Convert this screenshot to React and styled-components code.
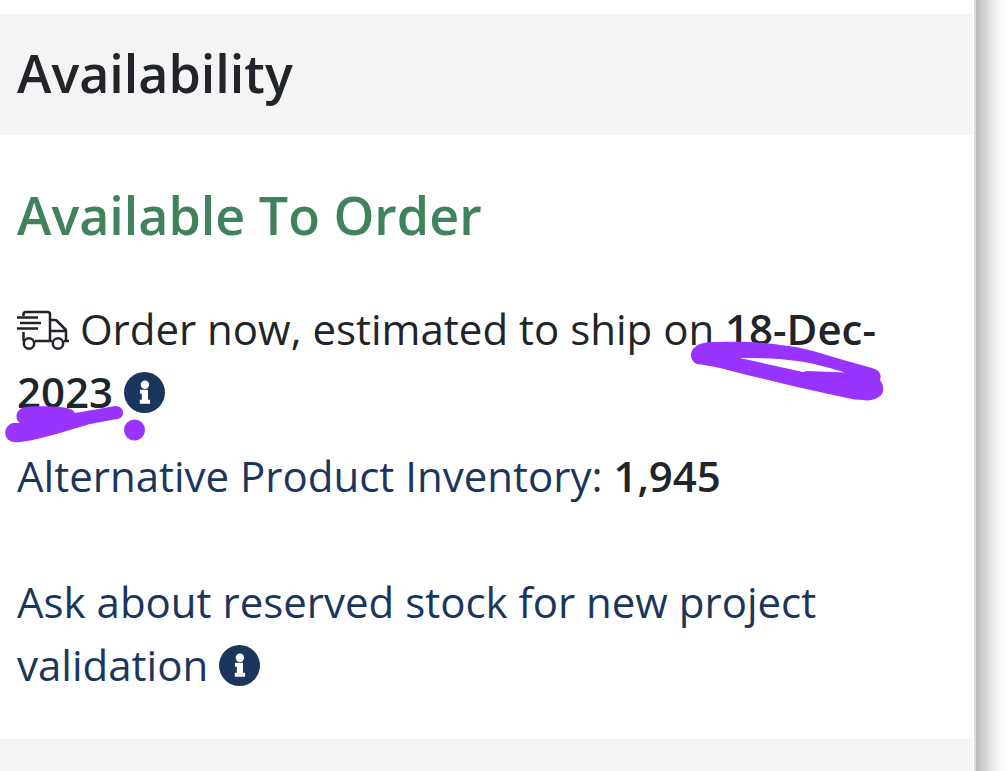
import React from "react";
import styled, { createGlobalStyle } from "styled-components";

const theme = {
  text: "#212529",
  link: "#1b365d",
  success: "#40825c",
  band: "#f4f4f4",
  marker: "#9933ff",
};

const InfoIcon = () => (
  <Info viewBox="0 0 40 40" aria-hidden="true">
    <circle cx="20" cy="20" r="20" fill={theme.link} />
    <circle cx="20.4" cy="12.5" r="4.1" fill="white" />
    <path d="M15.6 17.3H23.4V27H25.4V31H15.4V27H17.4V21.3H15.6Z" fill="white" />
  </Info>
);

const TruckIcon = () => (
  <Truck viewBox="0 0 52 40" aria-hidden="true">
    <path d="M6.500 6V4.500Q6.500 2 9 2H30.500Q33 2 33 4.500V31" />
    <path d="M0 7.500H21M3 13H24M0 18.500H21" />
    <path d="M6.500 22V31M18 31H35M47 31H52" />
    <path d="M33 10H38Q39 10 40 11L48.500 19.500Q49 20 49 21V31M33 21H49" />
    <circle cx="12" cy="33.500" r="5.200" />
    <circle cx="41" cy="33.500" r="5.200" />
  </Truck>
);

const App = () => (
  <Page>
    <GlobalStyle />
    <Panel>
      <Header>
        <Title>Availability</Title>
      </Header>
      <Body>
        <Status>Available To Order</Status>
        <Shipping>
          <TruckIcon /> Order now, estimated to ship on <b>18-Dec-2023</b>{" "}
          <IconButton type="button" aria-label="Shipping information">
            <InfoIcon />
          </IconButton>
          <Marker viewBox="0 0 900 160" aria-hidden="true">
            <path
              fillRule="evenodd"
              d="M697 67C689 64 688 52 700 47C706 45 711 45 717 45C740 44 763 45 780 48C792 49 802 51 813 54L847 64L872 71C879 73 882 77 880 83C886 91 883 99 877 101C873 103 868 104 863 103C858 103 852 102 847 101L797 90L747 78L720 71C712 69 704 68 697 67ZM740 61L803 75L807 74L845 75.500C828 70 812 66 797 64C778 61 759 61 740 61Z"
            />
            <path d="M20 126C15 123 15 114 22 111C26 109 46 109 60 110Q73 111 75 116C89 114 102 111 115 109C125 109 126 121 117 122L90 127C66 134 43 142 20 145C1 148 2 127 14 126Z" />
            <circle cx="134.500" cy="133" r="10.500" />
          </Marker>
        </Shipping>
        <Inventory>
          <Link href="#alternatives">Alternative Product Inventory:</Link> <b>1,945</b>
        </Inventory>
        <Reserved>
          <Link href="#reserved-stock">Ask about reserved stock for new project validation</Link>{" "}
          <IconButton type="button" aria-label="Reserved stock information">
            <InfoIcon />
          </IconButton>
        </Reserved>
      </Body>
      <Footer />
    </Panel>
    <Shadow />
  </Page>
);

export default App;

const GlobalStyle = createGlobalStyle`
  * {
    box-sizing: border-box;
  }

  body {
    margin: 0;
    background: white;
    color: ${theme.text};
    font-family: "Open Sans", "Noto Sans", sans-serif;
    font-size: 42px;
    line-height: 63px;
  }

  b {
    font-weight: 600;
  }
`;

const Page = styled.div`
  display: flex;
  min-height: 100vh;
`;

const Panel = styled.main`
  flex: 1;
  display: flex;
  flex-direction: column;
  padding: 14px 1px 0 0;
  border-right: 2px solid #dcdcdc;
`;

const Shadow = styled.div`
  width: 32px;
  background: linear-gradient(to right, #bababa, #d2d2d2 25%, #ececec 55%, #fafafa 80%, white);
`;

const Header = styled.header`
  padding: 27px 17px 30px;
  background: ${theme.band};
`;

const Title = styled.h2`
  margin: 0;
  font-size: 52px;
  font-weight: 600;
  line-height: 64px;
`;

const Status = styled(Title).attrs({ as: "h3" })`
  margin-bottom: 50px;
  color: ${theme.success};
`;

const Body = styled.section`
  padding: 48px 17px 43px;
`;

const Shipping = styled.p`
  position: relative;
  margin: 0 0 21px;
`;

const Inventory = styled.p`
  margin: 0 0 63px;
`;

const Reserved = styled.p`
  margin: 0;
`;

const Link = styled.a`
  color: ${theme.link};
  text-decoration: none;
`;

const IconButton = styled.button`
  display: inline-flex;
  padding: 0;
  border: 0;
  background: none;
  vertical-align: -5px;
  cursor: pointer;
`;

const Info = styled.svg`
  width: 41px;
  height: 41px;
`;

const Truck = styled.svg`
  width: 52px;
  height: 40px;
  vertical-align: -5px;
  fill: none;
  stroke: currentColor;
  stroke-width: 2.5;
`;

// hand-drawn highlight over the ship date
const Marker = styled.svg`
  position: absolute;
  top: 0;
  left: -17px;
  width: 900px;
  height: 160px;
  fill: ${theme.marker};
  pointer-events: none;
`;

const Footer = styled.footer`
  flex: 1;
  min-height: 32px;
  background: ${theme.band};
`;
